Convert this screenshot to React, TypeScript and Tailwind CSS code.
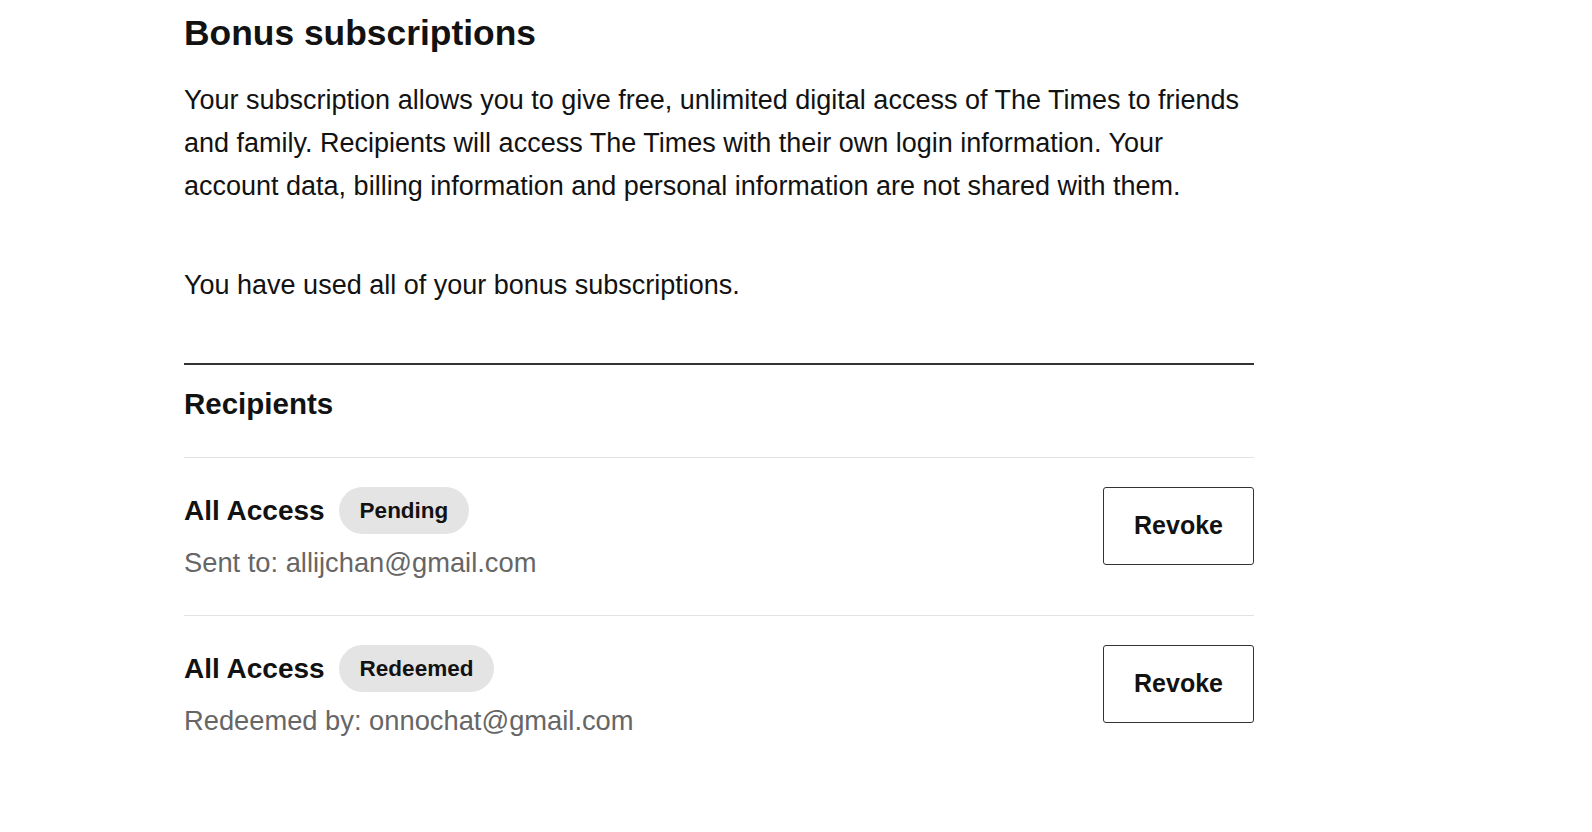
const RECIPIENTS = [
  { plan: "All Access", status: "Pending", detail: "Sent to: allijchan@gmail.com" },
  { plan: "All Access", status: "Redeemed", detail: "Redeemed by: onnochat@gmail.com" },
];

export default function App() {
  return (
    <div className="min-h-screen bg-white pl-[184px] pt-[13px] text-[#121212] font-['Liberation_Sans',Arial,sans-serif]">
      <div className="w-[1070px]">
        <h1 className="text-[35.4px] leading-[40px] font-bold">Bonus subscriptions</h1>

        <p className="mt-[26px] text-[27px] leading-[43px]">
          Your subscription allows you to give free, unlimited digital access of The Times to friends
          and family. Recipients will access The Times with their own login information. Your
          account data, billing information and personal information are not shared with them.
        </p>

        <p className="mt-[56px] text-[27px] leading-[43px]">You have used all of your bonus subscriptions.</p>

        <div className="mt-[56px] border-t-2 border-[#333333]">
          <div className="pt-[21px] pb-[35px] border-b border-[#e2e2e2]">
            <h2 className="text-[29.5px] leading-[36px] font-bold">Recipients</h2>
          </div>

          {RECIPIENTS.map((r, i) => (
            <div
              key={i}
              className={`flex items-start justify-between pt-[29px] pb-[34px] ${i === 0 ? "border-b border-[#e2e2e2]" : ""}`}
            >
              <div className="flex flex-col">
                <div className="flex items-center gap-[14px] h-[47px]">
                  <span className="text-[28px] leading-[36px] font-bold">{r.plan}</span>
                  <span className="h-[47px] px-[21px] rounded-full bg-[#e4e4e4] flex items-center text-[22.5px] font-bold">
                    {r.status}
                  </span>
                </div>
                <p className="mt-[11px] text-[27.3px] leading-[36px] text-[#666666]">{r.detail}</p>
              </div>
              <button className="w-[151px] h-[78px] border-[1.5px] border-[#333333] rounded-[3px] bg-white text-[25px] font-bold">
                Revoke
              </button>
            </div>
          ))}
        </div>
      </div>
    </div>
  );
}
